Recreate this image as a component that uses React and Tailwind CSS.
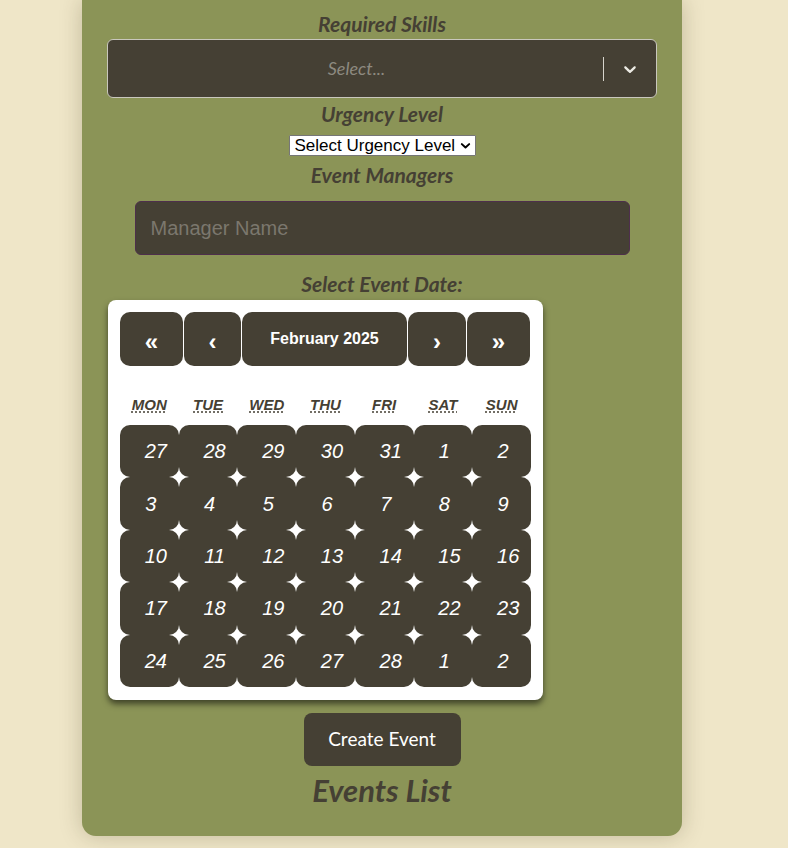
import React from "react";

const weekdays = [
  ["MON", "Monday"],
  ["TUE", "Tuesday"],
  ["WED", "Wednesday"],
  ["THU", "Thursday"],
  ["FRI", "Friday"],
  ["SAT", "Saturday"],
  ["SUN", "Sunday"],
];
const days = [
  27, 28, 29, 30, 31, 1, 2,
  3, 4, 5, 6, 7, 8, 9,
  10, 11, 12, 13, 14, 15, 16,
  17, 18, 19, 20, 21, 22, 23,
  24, 25, 26, 27, 28, 1, 2,
];

function Label({ children, className = "" }) {
  return (
    <div
      className={
        "h-[20px] leading-[20px] text-[21px] font-bold italic text-[#454034] text-center " +
        className
      }
      style={{ fontFamily: "Lato, 'Open Sans', sans-serif" }}
    >
      {children}
    </div>
  );
}

export default function App() {
  return (
    <div className="min-h-[848px] w-full bg-[#efe6c8] overflow-hidden">
      <div className="ml-[82px] w-[600px] bg-[#8b9457] rounded-b-[14px] shadow-[0_0_22px_rgba(60,50,20,0.25)] px-[25px] pt-[14px] pb-[30px] flex flex-col items-center">
        <Label>Required Skills</Label>
        <div className="mt-[5px] w-[550px] h-[59px] bg-[#454034] border border-[#c9c7bd] rounded-[6px] flex items-center">
          <div
            className="flex-1 text-center text-[18px] italic text-[#8d8a80] pl-[2px]"
            style={{ fontFamily: "Lato, 'Open Sans', sans-serif" }}
          >
            Select...
          </div>
          <div className="w-px h-[24px] bg-[#d6d4cc]" />
          <div className="w-[52px] flex items-center justify-center">
            <svg width="20" height="20" viewBox="0 0 20 20" fill="#ecebe4">
              <path d="M4.516 7.548c0.436-0.446 1.043-0.481 1.576 0l3.908 3.747 3.908-3.747c0.533-0.481 1.141-0.446 1.574 0 0.436 0.445 0.408 1.197 0 1.615-0.406 0.418-4.695 4.502-4.695 4.502-0.217 0.223-0.502 0.335-0.787 0.335s-0.57-0.112-0.789-0.335c0 0-4.287-4.084-4.695-4.502s-0.436-1.17 0-1.615z" />
            </svg>
          </div>
        </div>

        <Label className="mt-[6px]">Urgency Level</Label>
        <div className="mt-[11px] w-[187px] h-[21px] bg-white border border-[#767676] rounded-[1px] flex items-center pl-[5px] pr-[4px]">
          <span
            className="flex-1 text-[17px] text-black leading-[19px] whitespace-nowrap"
            style={{ fontFamily: "Arial, 'Liberation Sans', sans-serif" }}
          >
            Select Urgency Level
          </span>
          <svg width="11" height="11" viewBox="0 0 12 12" fill="none" stroke="#000" strokeWidth="2.2" strokeLinecap="round" strokeLinejoin="round">
            <path d="M2 4.5 L6 8.2 L10 4.5" />
          </svg>
        </div>

        <Label className="mt-[9px]">Event Managers</Label>
        <input
          className="mt-[16px] w-[495px] h-[54px] bg-[#454034] border border-[#4e2f4c] rounded-[6px] px-[15px] text-[20px] text-white placeholder:text-[#7b776d] outline-none"
          style={{ fontFamily: "Arial, 'Liberation Sans', sans-serif" }}
          placeholder="Manager Name"
        />

        <Label className="mt-[19px]">Select Event Date:</Label>

        <div
          className="mt-[6px] self-start ml-[1px] w-[435px] h-[400px] bg-white rounded-[8px] shadow-[0_4px_6px_rgba(0,0,0,0.55)] p-[12px]"
          style={{ fontFamily: "Arial, 'Liberation Sans', sans-serif" }}
        >
          <div className="flex gap-[1px] h-[54px]">
            <div className="w-[63px] bg-[#454034] rounded-[10px] flex items-center justify-center pt-[6px] text-white text-[24px] font-bold">«</div>
            <div className="w-[57px] bg-[#454034] rounded-[10px] flex items-center justify-center pt-[6px] text-white text-[24px] font-bold">‹</div>
            <div className="w-[165px] bg-[#454034] rounded-[10px] flex items-center justify-center text-white text-[16px] font-bold">February 2025</div>
            <div className="w-[58px] bg-[#454034] rounded-[10px] flex items-center justify-center pt-[6px] text-white text-[24px] font-bold">›</div>
            <div className="w-[63px] bg-[#454034] rounded-[10px] flex items-center justify-center pt-[6px] text-white text-[24px] font-bold">»</div>
          </div>
          <div className="grid grid-cols-7 h-[59px] items-end pb-[12px]">
            {weekdays.map(([a, t]) => (
              <div key={a} className="text-center text-[15px] font-bold italic text-[#454034] leading-[16px]">
                <abbr title={t} className="underline decoration-dotted underline-offset-[2px]">{a}</abbr>
              </div>
            ))}
          </div>
          <div className="grid grid-cols-7 grid-rows-5 h-[262px]">
            {days.map((d, i) => (
              <div
                key={i}
                className={
                  "bg-[#454034] rounded-[10px] flex items-center justify-center text-white text-[20px] italic " +
                  (d >= 10 ? "pl-[13px]" : "pl-[3px]")
                }
              >
                {d}
              </div>
            ))}
          </div>
        </div>

        <button
          className="mt-[13px] w-[157px] h-[53px] bg-[#454034] rounded-[8px] text-white text-[19px]"
          style={{ fontFamily: "Lato, 'Open Sans', sans-serif" }}
        >
          Create Event
        </button>
        <div
          className="mt-[8px] h-[32px] leading-[32px] text-[31px] font-bold italic text-[#454034]"
          style={{ fontFamily: "Lato, 'Open Sans', sans-serif" }}
        >
          Events List
        </div>
      </div>
    </div>
  );
}
